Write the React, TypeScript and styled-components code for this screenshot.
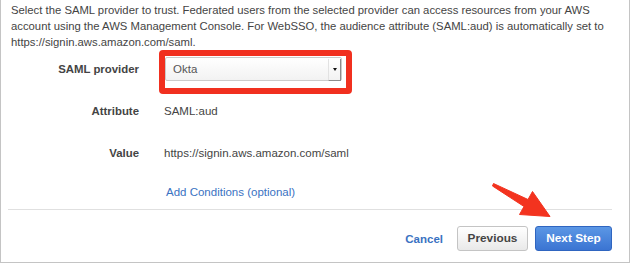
import React from "react"
import styled, { createGlobalStyle } from "styled-components"

const GlobalStyle = createGlobalStyle`
  html, body {
    margin: 0;
    padding: 0;
    background: #ffffff;
  }
  body {
    font-family: "Helvetica Neue", Helvetica, "Liberation Sans", Arial, sans-serif;
    color: #444444;
  }
`

const Panel = styled.div`
  position: relative;
  width: 628px;
  border: 1px solid #c4c4c4;
  border-top: none;
  background: #ffffff;
`

const Intro = styled.p`
  margin: 0;
  padding: 2px 10px 0 10px;
  font-size: 11.3px;
  line-height: 16px;
  white-space: nowrap;
  color: #444444;
`

const Form = styled.div`
  display: flex;
  flex-direction: column;
`

const Field = styled.div<{ $top: number; $align?: string }>`
  display: grid;
  grid-template-columns: 138px auto;
  column-gap: 20px;
  align-items: ${(p) => p.$align || "center"};
  margin-top: ${(p) => p.$top}px;
  line-height: 16px;
`

const Label = styled.div<{ $offset?: number }>`
  text-align: right;
  font-size: 11.4px;
  font-weight: 700;
  color: #444444;
  margin-top: ${(p) => p.$offset || 0}px;
  line-height: ${(p) => (p.$offset ? "24px" : "16px")};
`

const Value = styled.div`
  padding-left: 5px;
  font-size: 11.5px;
  color: #444444;
`

const Link = styled.a`
  padding-left: 7px;
  font-size: 11.5px;
  color: #3a72c2;
  text-decoration: none;
  cursor: pointer;
`

const Highlight = styled.div`
  justify-self: start;
  border: 6px solid #f1301f;
  border-radius: 4px;
  padding: 1px 4px 7px 0;
`

const Select = styled.div`
  box-sizing: border-box;
  width: 177px;
  height: 24px;
  display: flex;
  align-items: stretch;
  border: 1px solid #cbcbcb;
  border-radius: 2px;
  background: linear-gradient(#ffffff, #f2f2f2);
  font-size: 11.5px;
  color: #555555;
`

const SelectText = styled.div`
  flex: 1;
  display: flex;
  align-items: center;
  padding-left: 7px;
`

const SelectArrow = styled.div`
  width: 11px;
  display: flex;
  align-items: center;
  justify-content: center;
  border-left: 1px solid #e2e2e2;
  border-right: 1px solid #8c8c8c;
  border-bottom: 1px solid #8c8c8c;
  margin: 1px 0 -1px 0;
  &::after {
    content: "";
    border-left: 2px solid transparent;
    border-right: 2px solid transparent;
    border-top: 3px solid #111111;
  }
`

const Divider = styled.div`
  height: 1px;
  background: #e0e0e0;
  margin: 9px 17px 0 7px;
`

const Footer = styled.div`
  display: flex;
  justify-content: flex-end;
  align-items: center;
  padding: 16px 17px 11px 0;
`

const TextButton = styled.a`
  font-size: 11.5px;
  font-weight: 700;
  color: #3a72c2;
  margin-right: 14px;
  cursor: pointer;
`

const Button = styled.button<{ $primary?: boolean }>`
  box-sizing: border-box;
  height: 25px;
  padding: 0;
  width: ${(p) => (p.$primary ? "77px" : "71px")};
  margin-left: ${(p) => (p.$primary ? "7px" : "0")};
  border-radius: 3px;
  font-family: "Helvetica Neue", Helvetica, "Liberation Sans", Arial, sans-serif;
  font-size: 11.8px;
  font-weight: 700;
  line-height: 23px;
  color: ${(p) => (p.$primary ? "#ffffff" : "#444444")};
  border: 1px solid ${(p) => (p.$primary ? "#2f65c0" : "#c4c4c4")};
  background: ${(p) =>
    p.$primary
      ? "linear-gradient(#5b97e5, #3b74d2)"
      : "linear-gradient(#ffffff, #e9e9e9)"};
`

const Pointer = styled.svg`
  position: absolute;
  left: 0;
  top: 0;
  pointer-events: none;
`

export default function App() {
  return (
    <>
      <GlobalStyle />
      <Panel>
        <Intro>
          Select the SAML provider to trust. Federated users from the selected provider can access resources from your AWS
          <br />
          account using the AWS Management Console. For WebSSO, the audience attribute (SAML:aud) is automatically set to
          <br />
          https://signin.aws.amazon.com/saml.
        </Intro>
        <Form>
          <Field $top={0} $align="start">
            <Label $offset={7}>SAML provider</Label>
            <Highlight>
              <Select>
                <SelectText>Okta</SelectText>
                <SelectArrow />
              </Select>
            </Highlight>
          </Field>
          <Field $top={9}>
            <Label>Attribute</Label>
            <Value>SAML:aud</Value>
          </Field>
          <Field $top={26}>
            <Label>Value</Label>
            <Value>https://signin.aws.amazon.com/saml</Value>
          </Field>
          <Field $top={22}>
            <div />
            <div>
              <Link>Add Conditions (optional)</Link>
            </div>
          </Field>
        </Form>
        <Divider />
        <Footer>
          <TextButton>Cancel</TextButton>
          <Button>Previous</Button>
          <Button $primary>Next Step</Button>
        </Footer>
        <Pointer width="630" height="262" viewBox="0 0 630 262">
          <polygon
            points="492.5,183.5 527,199.5 531.5,191.5 549,216.5 518.5,214.5 523,206.5 491.5,186"
            fill="#f3331f"
            stroke="#f3331f"
            strokeWidth="1"
            strokeLinejoin="round"
          />
        </Pointer>
      </Panel>
    </>
  )
}
